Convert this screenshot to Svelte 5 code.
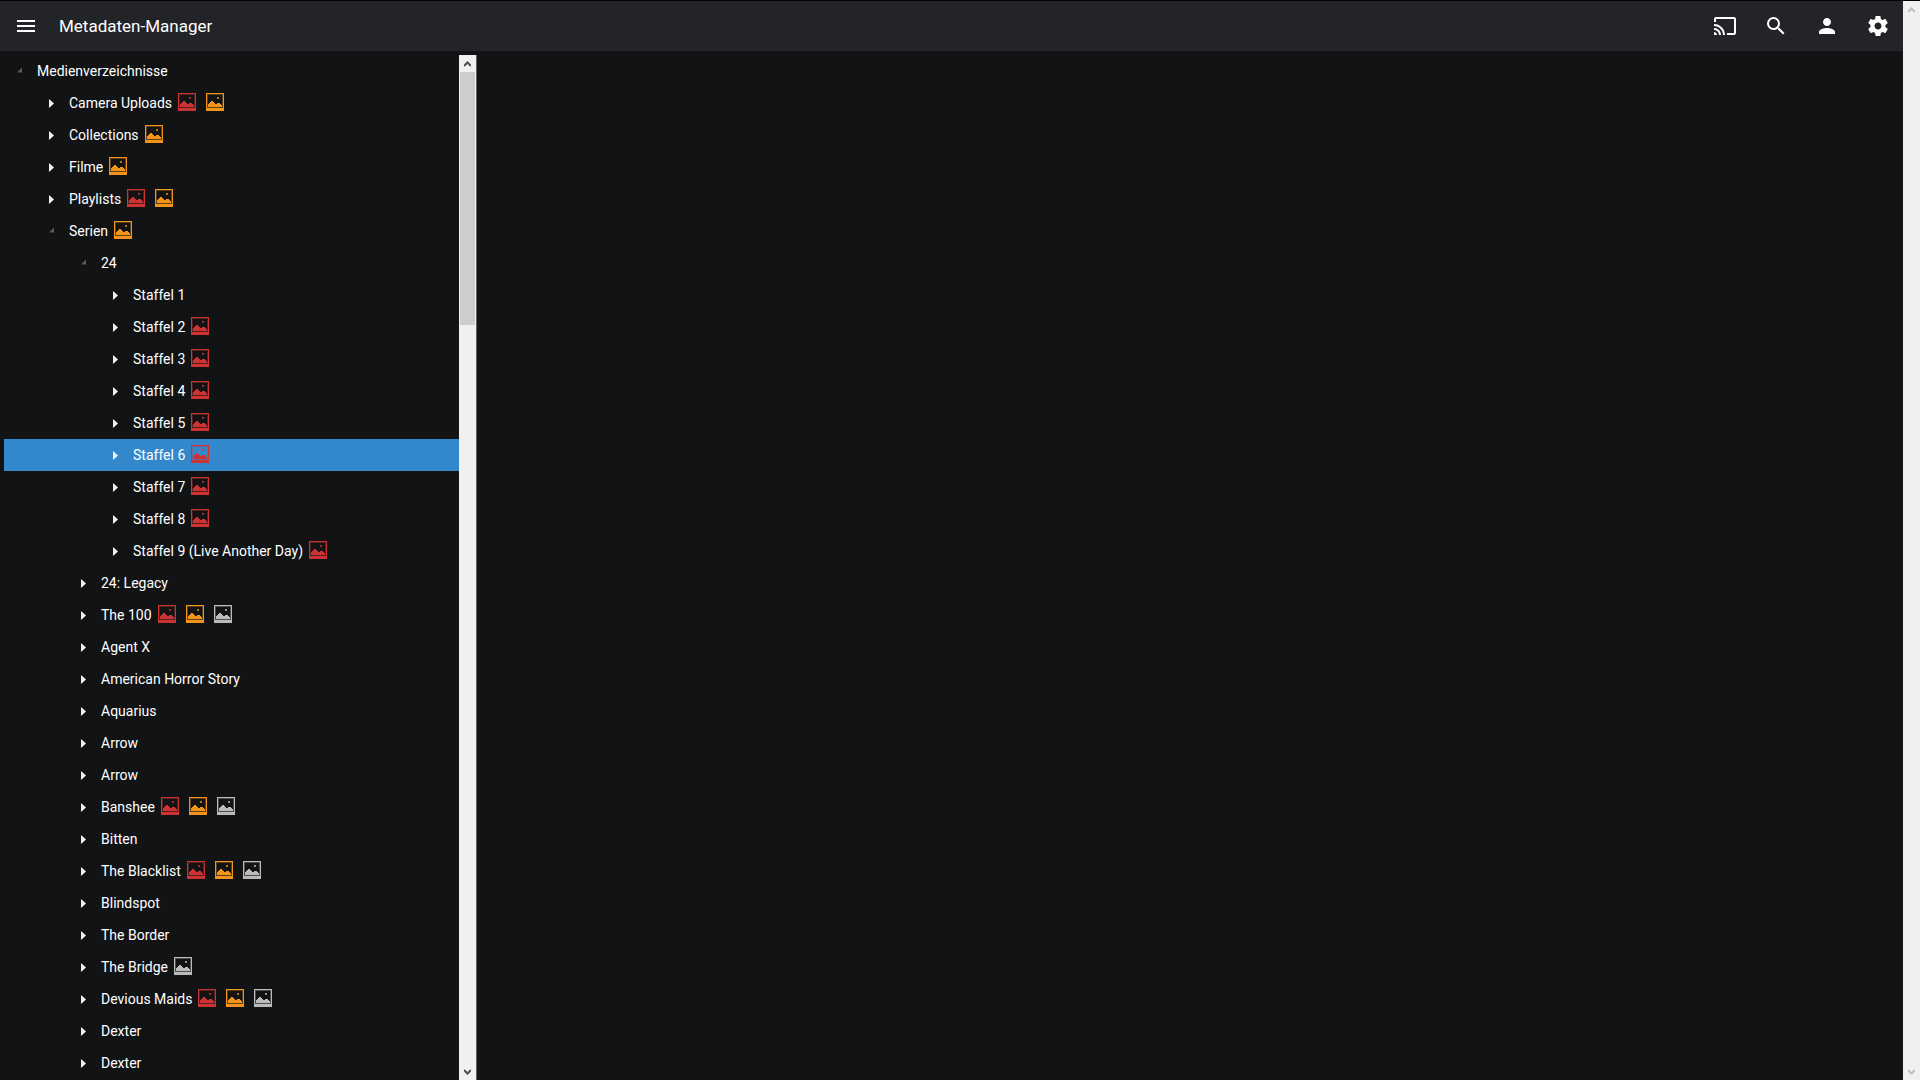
<script>
  const tree = [
    [0, 'Medienverzeichnisse', '', true],
    [1, 'Camera Uploads', 'ro'],
    [1, 'Collections', 'o'],
    [1, 'Filme', 'o'],
    [1, 'Playlists', 'ro'],
    [1, 'Serien', 'o', true],
    [2, '24', '', true],
    [3, 'Staffel 1', ''],
    [3, 'Staffel 2', 'r'],
    [3, 'Staffel 3', 'r'],
    [3, 'Staffel 4', 'r'],
    [3, 'Staffel 5', 'r'],
    [3, 'Staffel 6', 'r'],
    [3, 'Staffel 7', 'r'],
    [3, 'Staffel 8', 'r'],
    [3, 'Staffel 9 (Live Another Day)', 'r'],
    [2, '24: Legacy', ''],
    [2, 'The 100', 'rog'],
    [2, 'Agent X', ''],
    [2, 'American Horror Story', ''],
    [2, 'Aquarius', ''],
    [2, 'Arrow', ''],
    [2, 'Arrow', ''],
    [2, 'Banshee', 'rog'],
    [2, 'Bitten', ''],
    [2, 'The Blacklist', 'rog'],
    [2, 'Blindspot', ''],
    [2, 'The Border', ''],
    [2, 'The Bridge', 'g'],
    [2, 'Devious Maids', 'rog'],
    [2, 'Dexter', ''],
    [2, 'Dexter', '']
  ].map(([level, label, marks, open = false]) => ({ level, label, marks: [...marks], open }));

  let selected = $state(12);
</script>

{#snippet chevron(down)}
  <svg class="chevron" class:down width="7" height="6" viewBox="0 0 7 6" aria-hidden="true">
    <path d="M0 5 3.500 1.500 7 5" fill="none" stroke="currentColor" stroke-width="2" />
  </svg>
{/snippet}

<div class="page">
  <div class="app">
    <header>
      <button class="icon menu" aria-label="Menü">
        <svg viewBox="0 0 24 24"><path d="M3 18h18v-2H3v2zm0-5h18v-2H3v2zm0-7v2h18V6H3z" /></svg>
      </button>
      <h1>Metadaten-Manager</h1>
      <nav>
        <button class="icon" aria-label="Übertragen">
          <svg viewBox="0 0 24 24"><path d="M21 3H3c-1.100 0-2 .9-2 2v3h2V5h18v14h-7v2h7c1.100 0 2-.9 2-2V5c0-1.100-.9-2-2-2zM1 18v3h3c0-1.660-1.340-3-3-3zm0-4v2c2.760 0 5 2.240 5 5h2c0-3.870-3.130-7-7-7zm0-4v2c4.970 0 9 4.030 9 9h2c0-6.080-4.930-11-11-11z" /></svg>
        </button>
        <button class="icon" aria-label="Suche">
          <svg viewBox="0 0 24 24"><path d="M15.500 14h-.79l-.28-.27A6.470 6.470 0 0 0 16 9.500 6.500 6.500 0 1 0 9.500 16c1.610 0 3.090-.59 4.230-1.570l.27.28v.79l5 4.990L20.490 19l-4.990-5zm-6 0C7.010 14 5 11.990 5 9.500S7.010 5 9.500 5 14 7.010 14 9.500 11.990 14 9.500 14z" /></svg>
        </button>
        <button class="icon" aria-label="Benutzer">
          <svg viewBox="0 0 24 24"><path d="M12 12c2.210 0 4-1.790 4-4s-1.790-4-4-4-4 1.790-4 4 1.790 4 4 4zm0 2c-2.670 0-8 1.340-8 4v2h16v-2c0-2.660-5.330-4-8-4z" /></svg>
        </button>
        <button class="icon" aria-label="Einstellungen">
          <svg viewBox="0 0 24 24"><path d="M19.430 12.980c.04-.32.07-.64.07-.98s-.03-.66-.07-.98l2.110-1.650c.19-.15.24-.42.12-.64l-2-3.460c-.12-.22-.39-.3-.61-.22l-2.490 1c-.52-.4-1.080-.73-1.690-.98l-.38-2.650C14.460 2.180 14.250 2 14 2h-4c-.25 0-.46.18-.49.42l-.38 2.650c-.61.25-1.170.59-1.690.98l-2.490-1c-.23-.09-.49 0-.61.22l-2 3.460c-.13.22-.07.49.12.64l2.110 1.650c-.04.32-.07.65-.07.98s.03.66.07.98l-2.110 1.650c-.19.15-.24.42-.12.64l2 3.460c.12.22.39.3.61.22l2.490-1c.52.4 1.080.73 1.690.98l.38 2.650c.03.24.24.42.49.42h4c.25 0 .46-.18.49-.42l.38-2.650c.61-.25 1.170-.59 1.690-.98l2.490 1c.23.09.49 0 .61-.22l2-3.460c.12-.22.07-.49-.12-.64l-2.110-1.650zM12 15.500c-1.930 0-3.500-1.570-3.500-3.500s1.570-3.500 3.500-3.500 3.500 1.570 3.500 3.500-1.570 3.500-3.500 3.500z" /></svg>
        </button>
      </nav>
    </header>

    <main>
      <aside>
        <div class="tree" role="tree" aria-label="Medienverzeichnisse">
          {#each tree as node, i}
            <button
              class="row level-{node.level}"
              class:selected={selected === i}
              role="treeitem"
              aria-level={node.level + 1}
              aria-expanded={node.open}
              aria-selected={selected === i}
              onclick={() => (selected = i)}
            >
              <svg class="arrow" class:open={node.open} width="10" height="12" viewBox="0 0 10 12" aria-hidden="true">
                {#if node.open}
                  <path d="M5 2.500V7.500H0z" />
                {:else}
                  <path d="M0 2 5 6.500 0 11z" />
                {/if}
              </svg>
              <span class="label">{node.label}</span>
              {#each node.marks as mark}
                <svg class="mark {mark}" width="18" height="18" viewBox="0 0 18 18" shape-rendering="crispEdges" aria-hidden="true">
                  <path d="M0 0h18v18H0zM1 1v14h16V1z" fill-rule="evenodd" />
                  <path class="inner" d="M1 1h16v14H1zM2 2v12h14V2z" fill-rule="evenodd" />
                  <path d="M2 14v-3h1v-1h1V9h1V8h2v1h1v1h1v1h2v-1h3v1h1v1h1v2z" />
                  <path class="sun" d="M11 4h2v2h-2z" />
                </svg>
              {/each}
            </button>
          {/each}
        </div>
        <div class="scrollbar" aria-hidden="true">
          {@render chevron(false)}
          <div class="track"><div class="thumb"></div></div>
          {@render chevron(true)}
        </div>
      </aside>
      <section></section>
    </main>
  </div>
  <div class="scrollbar outer" aria-hidden="true">
    {@render chevron(false)}
    <div class="track"></div>
    {@render chevron(true)}
  </div>
</div>

<style>
  :global(body) {
    margin: 0;
    background: #111315;
    font-family: Roboto, sans-serif;
    color: #fff;
  }
  button {
    font: inherit;
    color: inherit;
    background: none;
    border: 0;
    padding: 0;
    cursor: pointer;
  }
  .page {
    display: flex;
    height: 100vh;
    overflow: hidden;
    box-sizing: border-box;
    border-top: 1px solid #000;
  }
  .app {
    flex: 1;
    min-width: 0;
    display: flex;
    flex-direction: column;
  }
  header {
    display: flex;
    align-items: center;
    flex: none;
    height: 50px;
    padding: 0 13px 0 14px;
    background: #222427;
  }
  h1 {
    flex: 1;
    margin: 0 0 0 21px;
    font-size: 17px;
    line-height: 24px;
    font-weight: 400;
  }
  .icon {
    display: flex;
  }
  .icon svg {
    width: 24px;
    height: 24px;
    fill: #fff;
  }
  nav {
    display: flex;
    gap: 27px;
  }
  main {
    flex: 1;
    min-height: 0;
    display: flex;
    padding: 4px 0 0 4px;
  }
  aside {
    display: flex;
    width: 25%;
    min-width: 300px;
    max-width: 473px;
    box-sizing: border-box;
    border-right: 1px solid #606162;
  }
  section {
    flex: 1;
  }
  .tree {
    flex: 1;
    min-width: 0;
    overflow: hidden;
  }
  .row {
    display: flex;
    align-items: center;
    width: 100%;
    height: 32px;
    font-size: 14px;
    line-height: 20px;
    text-align: left;
    white-space: nowrap;
  }
  .level-0 { padding-left: 13px; }
  .level-1 { padding-left: 45px; }
  .level-2 { padding-left: 77px; }
  .level-3 { padding-left: 109px; }
  .selected {
    background: #3388cc;
  }
  .arrow {
    flex: none;
    margin-right: 10px;
    fill: #f4f4f4;
  }
  .arrow.open {
    fill: #5c5d5e;
  }
  .label {
    margin-right: 6px;
  }
  .mark {
    flex: none;
    margin: 0 10px 2px 0;
    fill: currentColor;
  }
  .mark .inner {
    opacity: 0.35;
  }
  .mark .sun {
    opacity: 0.75;
  }
  .r { color: #cc3333; }
  .o { color: #f2941a; }
  .g { color: #bbbbbb; }
  .scrollbar {
    flex: none;
    display: flex;
    flex-direction: column;
    align-items: center;
    width: 17px;
    box-sizing: border-box;
    background: #f0f0f0;
    color: #505050;
  }
  .outer {
    color: #bfbfbf;
  }
  .track {
    flex: 1;
    align-self: stretch;
    padding: 0 1px;
  }
  .thumb {
    height: 25.500%;
    background: #cdcdcd;
  }
  .chevron {
    flex: none;
    margin: 6px 0 5px;
  }
  .down {
    transform: rotate(180deg);
  }
</style>
